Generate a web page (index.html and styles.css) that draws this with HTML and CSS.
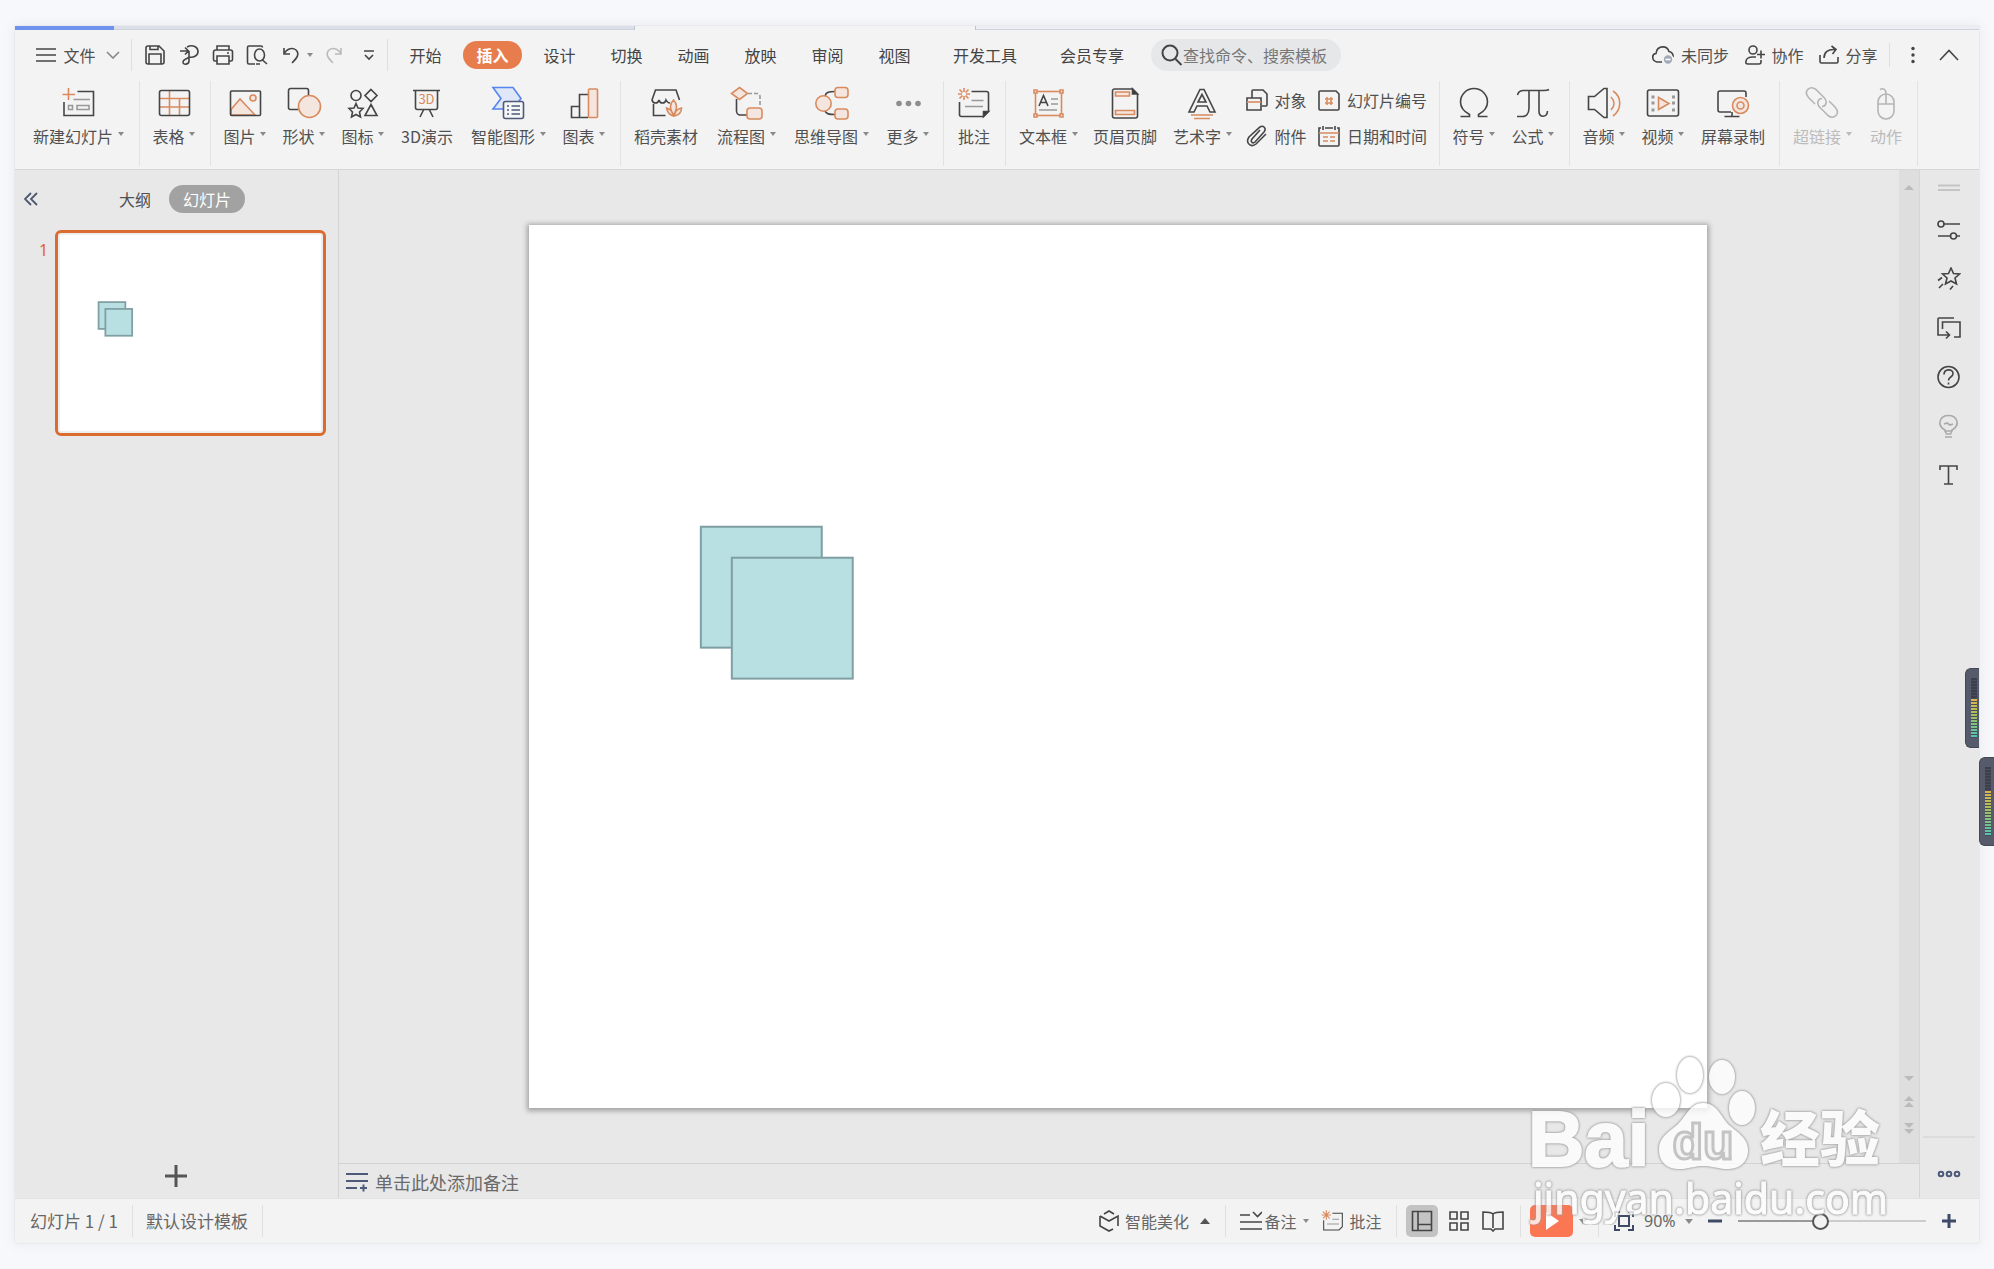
FILE: index.html
```html
<!DOCTYPE html>
<html lang="zh-CN">
<head>
<meta charset="utf-8">
<title>演示文稿</title>
<link rel="stylesheet" href="styles.css">
</head>
<body>
<div class="window">
  <div class="doc-tabs"><span class="doc-tab home"></span><span class="doc-tab"></span><span class="doc-tab current"></span><span class="doc-tab rest"></span></div>

  <header class="menubar">
    <button class="file-btn">
      <svg width="20" height="16" viewBox="0 0 20 16"><path d="M0 2h20M0 8h20M0 14h20"/></svg>
      <span>文件</span>
      <svg width="14" height="8" viewBox="0 0 14 8" class="thin"><path d="M1 1l6 6 6-6"/></svg>
    </button>
    <div class="quick">
      <button aria-label="保存"><svg width="22" height="22" viewBox="0 0 22 22"><path d="M4 2h11l5 5v11a2 2 0 0 1-2 2H4a2 2 0 0 1-2-2V4a2 2 0 0 1 2-2zM5 20V10h12v10M6 2v3.500h8V2"/></svg></button>
      <button aria-label="输出为PDF"><svg width="22" height="22" viewBox="0 0 22 22"><path d="M2 7h8M7 3.500L10.500 7 7 10.500M9 3c6-3 11 0 11 4.500S15 14 11 13M11 7v10c0 3.500-6 4.500-6 1 0-3 3-2 6-5"/></svg></button>
      <button aria-label="打印"><svg width="22" height="22" viewBox="0 0 22 22"><path d="M5 6V2h12v4M5 17H3a1.500 1.500 0 0 1-1.500-1.500V8A2 2 0 0 1 3.500 6h15a2 2 0 0 1 2 2v7.500A1.500 1.500 0 0 1 19 17h-2M5 12h12v8H5zM15 9h2"/></svg></button>
      <button aria-label="打印预览"><svg width="22" height="22" viewBox="0 0 22 22"><path d="M9 20H3a1.500 1.500 0 0 1-1.500-1.500v-15A1.500 1.500 0 0 1 3 2h12a1.500 1.500 0 0 1 1.500 1.500M10 20h4M16.500 16l4.500 4"/><ellipse cx="13.500" cy="11" rx="5" ry="6"/></svg></button>
      <button class="undo" aria-label="撤销"><svg width="18" height="20" viewBox="0 0 18 20"><path d="M2 3v6h6M2 9c3-6 9-6.500 12-4 4 4 1 8-4 13"/></svg><i class="caret"></i></button>
      <button class="dim" aria-label="恢复"><svg width="18" height="20" viewBox="0 0 18 20"><path d="M16 3v6h-6M16 9C13 3 7 2.500 4 5c-4 4-1 8 4 13"/></svg></button>
      <button class="custom" aria-label="自定义"><svg width="12" height="14" viewBox="0 0 12 14"><path d="M1 3h10M2 7l4 4 4-4"/></svg></button>
    </div>
    <nav class="tabs">
      <button>开始</button><button class="active">插入</button><button>设计</button><button>切换</button><button>动画</button><button>放映</button><button>审阅</button><button>视图</button><button class="wide">开发工具</button><button class="wide">会员专享</button>
    </nav>
    <label class="search"><svg width="22" height="22" viewBox="0 0 22 22"><circle cx="9" cy="9" r="7.500"/><path d="M14.500 15l6 6"/></svg><input type="text" placeholder="查找命令、搜索模板" aria-label="查找命令、搜索模板"></label>
    <div class="account">
      <button><svg width="22" height="20" viewBox="0 0 22 20"><path d="M10 17H5C-.500 16-.500 9 4 8.500 5 0 15 0 17 6.500c3 .500 4.500 3 4 5.500"/><circle cx="16" cy="14.500" r="5" class="badge"/><path d="M13.500 14.500h5" stroke="#fff"/></svg><span class="c3">未同步</span></button>
      <button><svg width="20" height="20" viewBox="0 0 20 20"><circle cx="8" cy="5" r="4"/><path d="M16 15v2a2 2 0 0 1-2 2H3c-2 0-2.500-1-2-3 .500-3 3-4 7-4h3M12 9.500h8M16 5.500v8"/></svg><span class="c2">协作</span></button>
      <button><svg width="20" height="20" viewBox="0 0 20 20"><path d="M1 10v6.500A1.500 1.500 0 0 0 2.500 18h15a1.500 1.500 0 0 0 1.500-1.500V12M5 13c0-6 4-9 11-8.500M12.500 1l4.500 3.500L13.500 9"/></svg><span class="c2">分享</span></button>
    </div>
    <div class="extras">
      <button aria-label="更多选项"><svg width="6" height="18" viewBox="0 0 6 18" class="dots"><circle cx="3" cy="2.500" r="1.700"/><circle cx="3" cy="9" r="1.700"/><circle cx="3" cy="15.500" r="1.700"/></svg></button>
      <button aria-label="收起功能区"><svg width="20" height="12" viewBox="0 0 20 12"><path d="M1 11l9-9.500 9 9.500"/></svg></button>
    </div>
  </header>

  <section class="ribbon">
    <div class="group">
      <button class="tool"><svg viewBox="0 0 36 36"><path d="M17.500 6.500h16v24H4V17"/><path class="g" d="M13.500 14.500H30M8.500 20.500h4v4h-4zM17 20.500h12v4H17z"/><path class="o" d="M2.500 9.500h12.500M8.500 3v12"/></svg><span><b class="c5">新建幻灯片</b><i class="caret"></i></span></button>
    </div>
    <div class="group">
      <button class="tool"><svg viewBox="0 0 36 36"><path class="o" d="M4 13.500h29M4 22h29M13.500 5v25.500M23.500 13.500v17"/><rect x="3.500" y="5.500" width="30" height="25" rx="2"/></svg><span><b class="c2">表格</b><i class="caret"></i></span></button>
    </div>
    <div class="group">
      <button class="tool"><svg viewBox="0 0 36 36"><path class="of" d="M4 24.500L13 14l15 16H4z"/><circle class="of" cx="26" cy="13" r="3"/><rect x="3.500" y="6" width="30" height="24.500" rx="1"/></svg><span><b class="c2">图片</b><i class="caret"></i></span></button>
      <button class="tool"><svg viewBox="0 0 36 36"><path d="M12 24.500H4.500a2 2 0 0 1-2-2v-17a2 2 0 0 1 2-2h16a2 2 0 0 1 2 2v6"/><circle class="of" cx="23.500" cy="21.500" r="11"/></svg><span><b class="c2">形状</b><i class="caret"></i></span></button>
      <button class="tool"><svg viewBox="0 0 36 36"><circle cx="11" cy="10.500" r="5"/><path d="M26 4.500l6 6-6 6-6-6zM26 19.500l6 11H20zM11 18.500l2 4.500 5 .500-3.500 3.500 1 5-4.500-2.500L6.500 32l1-5L4 23.500 9 23z"/></svg><span><b class="c2">图标</b><i class="caret"></i></span></button>
      <button class="tool"><svg viewBox="0 0 36 36"><path d="M4 5.500h27M6.500 5.500v17a2 2 0 0 0 2 2h18a2 2 0 0 0 2-2v-17M14.500 25l-3.500 7M20.500 25l3.500 7"/><text x="17.500" y="19" class="t3d">3D</text></svg><span><b class="c3d">3D演示</b></span></button>
      <button class="tool"><svg viewBox="0 0 36 36"><path class="blue" d="M3 2.500h20l8 11-8 10.500H3l8-10.500z"/><rect x="13.500" y="16.500" width="20" height="17" rx="2" class="navy"/><path class="navy" d="M17 21h2M21.500 21H30M17 25h2M21.500 25H30M17 29h2M21.500 29H30"/></svg><span><b class="c4">智能图形</b><i class="caret"></i></span></button>
      <button class="tool"><svg viewBox="0 0 36 36"><path d="M13.500 32.500h-8v-11h8M22 32.500h-8.500V9.500H22"/><rect class="of" x="22.500" y="4" width="9" height="28.500" rx="1"/></svg><span><b class="c2">图表</b><i class="caret"></i></span></button>
    </div>
    <div class="group docer">
      <button class="tool"><svg viewBox="0 0 36 36"><path d="M31.500 15L28 5H7.500L4 15c1 4 6 4 7 0 1 4 6 4 7 0 1 2 2 3 4 3M5.500 19v11.500h12"/><path class="of" d="M25.500 15c-4 4-4 8 0 15.500 4-7.500 4-11.500 0-15.500zM18.500 23c1 5 3 7 7 8-1-5-3-7-7-8zM33.500 23c-4 1-7 3-7 8 4-1 7-3 7-8z"/></svg><span><b class="c4">稻壳素材</b></span></button>
      <button class="tool"><svg viewBox="0 0 36 36"><path d="M8.500 14v12a4 4 0 0 0 4 4h7"/><path class="g" stroke-dasharray="4 2" d="M20 8.500h9a3 3 0 0 1 3 3V22"/><path class="of" d="M11.500 2.500l8 6-8 6-8-6z"/><rect class="of" x="19" y="23" width="15" height="11" rx="3"/></svg><span><b class="c3">流程图</b><i class="caret"></i></span></button>
      <button class="tool"><svg viewBox="0 0 36 36"><path d="M12 11c1-4 4-4.500 10-4.500M12 26c1 3 4 3.500 10 3.500"/><circle class="of" cx="10.500" cy="18.500" r="7.700"/><rect class="of" x="22" y="2.500" width="13" height="10" rx="3"/><rect class="of" x="22" y="24" width="13" height="10" rx="3"/></svg><span><b class="c4">思维导图</b><i class="caret"></i></span></button>
      <button class="tool"><svg viewBox="0 0 36 36"><g class="more"><circle cx="9" cy="18.500" r="2.800"/><circle cx="18.500" cy="18.500" r="2.800"/><circle cx="28" cy="18.500" r="2.800"/></g></svg><span><b class="c2">更多</b><i class="caret"></i></span></button>
    </div>
    <div class="group plain">
      <button class="tool"><svg viewBox="0 0 36 36"><path d="M15.500 6.500h15a2 2 0 0 1 2 2v18l-5 5h-22a2 2 0 0 1-2-2V17"/><path class="dark" d="M32.500 26.500h-5v5z"/><path class="g" d="M15.500 15.500h12M9 21.500h18"/><path class="o" d="M2 9h4M10 9h4M8 3v4M8 11v4M3.500 4.500l3 3M9.500 10.500l3 3M12.500 4.500l-3 3M6.500 10.500l-3 3"/></svg><span><b class="c2">批注</b></span></button>
    </div>
    <div class="group text">
      <button class="tool"><svg viewBox="0 0 36 36"><rect class="o" x="5.500" y="6.500" width="26" height="24"/><g class="knob"><path d="M4 5h3v3H4zM30 5h3v3h-3zM4 29h3v3H4zM30 29h3v3h-3z"/></g><path d="M9 21l4.500-10.500L18 21M10.500 17.500h6"/><path class="g" d="M21 14h7M21 19h7M9 25h18"/></svg><span><b class="c3">文本框</b><i class="caret"></i></span></button>
      <button class="tool"><svg viewBox="0 0 36 36"><path d="M25.500 4h-18a2 2 0 0 0-2 2v25a2 2 0 0 0 2 2h21a2 2 0 0 0 2-2V9z"/><path class="dark" d="M25.500 4v5h5z"/><path class="of" d="M8.500 7h14v4h-14zM8.500 25.500h19v4h-19z"/></svg><span><b class="c4">页眉页脚</b></span></button>
      <button class="tool"><svg viewBox="0 0 36 36"><path d="M16 4.500h4L31 27h-5l-3-6H13l-3 6H5zM18 9.500l-4 7.500h8z"/><path class="o" d="M7 30h22M10 33.500h16"/></svg><span><b class="c3">艺术字</b><i class="caret"></i></span></button>
      <div class="stack">
        <button><svg viewBox="0 0 22 22"><path d="M6 9V2a1 1 0 0 1 1-1h10l4 4v11a1 1 0 0 1-1 1h-4M1 9h14v12H1z"/><path class="o" d="M1 13h14"/></svg><b class="c2">对象</b></button>
        <button><svg viewBox="0 0 22 22"><path d="M18 2H2a1 1 0 0 0-1 1v17a1 1 0 0 0 1 1h18a1 1 0 0 0 1-1V5z"/><path class="o" d="M9 8v8M13 8v8M7 10h8M7 14h8"/></svg><b class="c5">幻灯片编号</b></button>
        <button><svg viewBox="0 0 22 22"><path d="M14 5l-8 9c-2 3 1 5 3 3l9-10c3-4-1-7-4-5L3 12c-4 6 2 11 7 7l10-10"/></svg><b class="c2">附件</b></button>
        <button><svg viewBox="0 0 22 22"><path d="M3 3H1v17a1 1 0 0 0 1 1h18a1 1 0 0 0 1-1V3h-2M7 3h8M5 1v4M17 1v4"/><path class="o" d="M1 8h20M5 12h5M12 12h5M5 16h5M12 16h5"/></svg><b class="c5">日期和时间</b></button>
      </div>
    </div>
    <div class="group">
      <button class="tool"><svg viewBox="0 0 36 36"><path d="M4.500 31.500h9v-2C7 26 4.500 22 4.500 17a13.500 13.500 0 0 1 27 0c0 5-2.500 9-9 12.500v2h9"/></svg><span><b class="c2">符号</b><i class="caret"></i></span></button>
      <button class="tool"><svg viewBox="0 0 36 36"><path d="M2.500 10c1-4 3-4.500 6-4.500h20c3 0 4 0 5.500-1M14 6v17c0 6-3 9-8 8.500H2M24 6v20c0 7 8 7 8.500 0"/></svg><span><b class="c2">公式</b><i class="caret"></i></span></button>
    </div>
    <div class="group plain">
      <button class="tool"><svg viewBox="0 0 36 36"><path d="M2.500 11.500h6l9.500-8h3v29h-3l-9.500-8h-6z"/><path class="o" d="M25 12c4 4 4 9 0 13M27 6c9 6 9 18 0 25"/></svg><span><b class="c2">音频</b><i class="caret"></i></span></button>
      <button class="tool"><svg viewBox="0 0 36 36"><rect x="2.500" y="5" width="31" height="26" rx="2"/><path class="of" d="M13.500 12.500v12L24 18.500z"/><path class="g" d="M6.500 12h3M6.500 18h3M6.500 25h3M27 12h3M27 18h3M27 25h3" stroke-width="3"/></svg><span><b class="c2">视频</b><i class="caret"></i></span></button>
      <button class="tool"><svg viewBox="0 0 36 36"><path d="M16 27H5a2 2 0 0 1-2-2V8a2 2 0 0 1 2-2h24a2 2 0 0 1 2 2v4M17 27v4M9.500 31.500h15"/><circle class="of" cx="25.500" cy="20.500" r="8"/><circle class="o" cx="25.500" cy="20.500" r="3.500"/></svg><span><b class="c4">屏幕录制</b></span></button>
    </div>
    <div class="group plain">
      <button class="tool off" disabled><svg viewBox="0 0 36 36"><path d="M11 19L4.500 12.500C-1 6 6 0 12 4.500l8 8c4 4 2 9-2 9M25 16l6 6c6 7-1 13-7 8.500l-8-8c-4-4-2-9 2-9"/></svg><span><b class="c3">超链接</b><i class="caret"></i></span></button>
      <button class="tool off" disabled><svg viewBox="0 0 36 36"><rect x="10" y="9" width="16" height="25" rx="8"/><path d="M10 19h16M18 19V8c0-4-3-5-6-3.500"/></svg><span><b class="c2">动作</b></span></button>
    </div>
  </section>

  <main class="workspace">
    <aside class="outline">
      <div class="outline-head">
        <button class="collapse" aria-label="收起"><svg width="14" height="14" viewBox="0 0 14 14"><path d="M7 1L1 7l6 6M13 1L7 7l6 6"/></svg></button>
        <button class="o-tab">大纲</button><button class="o-tab on">幻灯片</button>
      </div>
      <div class="thumb-row">
        <span class="num">1</span>
        <button class="thumb" aria-label="幻灯片 1"><svg viewBox="0 0 1179 883" class="shapes mini"><rect x="171" y="301" width="122" height="122"/><rect x="202" y="332" width="122" height="122"/></svg></button>
      </div>
      <button class="add" aria-label="新建幻灯片"><svg width="22" height="22" viewBox="0 0 22 22"><path d="M0 11h22M11 0v22"/></svg></button>
    </aside>
    <section class="editor">
      <div class="stage">
        <div class="canvas"><div class="slide"><svg viewBox="0 0 1179 883" class="shapes"><rect x="172" y="302" width="121" height="121"/><rect x="203" y="333" width="121" height="121"/></svg></div></div>
        <div class="scroll">
          <svg width="10" height="6" viewBox="0 0 10 6"><path d="M0 6l5-5 5 5z"/></svg>
          <div class="scroll-end">
            <svg width="10" height="6" viewBox="0 0 10 6"><path d="M0 0l5 5 5-5z"/></svg>
            <svg width="10" height="12" viewBox="0 0 10 12"><path d="M0 5l5-5 5 5zM0 11l5-5 5 5z"/></svg>
            <svg width="10" height="12" viewBox="0 0 10 12"><path d="M0 1l5 5 5-5zM0 7l5 5 5-5z"/></svg>
          </div>
        </div>
      </div>
      <div class="notes"><svg width="22" height="20" viewBox="0 0 22 20"><path d="M0 2h22M0 9h22M0 16h11M14 16h7M17.500 12.500v7"/></svg><span>单击此处添加备注</span></div>
    </section>
    <aside class="side">
      <svg width="22" height="8" viewBox="0 0 22 8" class="grip"><path d="M0 1.500h22M0 6h22"/></svg>
      <div class="side-tools">
        <button aria-label="属性"><svg viewBox="0 0 24 24"><circle cx="4" cy="6" r="3"/><circle cx="16.500" cy="18" r="3"/><path d="M7 6h16M1 18h12.500M19.500 18H23"/></svg></button>
        <button aria-label="动画"><svg viewBox="0 0 24 24"><path d="M14 1l2.500 5.500 6 .500-4.500 4 1.500 6-5.500-3-5.500 3L10 11 5.500 7l6-.500zM5 10.500l-4 3M6 17l-4 4M16 19l-3 3.500"/></svg></button>
        <button aria-label="切换"><svg viewBox="0 0 24 24"><path d="M17 2H2a1 1 0 0 0-1 1v16h11M9 15.500l3.500 3.500L9 22.500M5.500 13V6H23v15h-6"/></svg></button>
        <button aria-label="帮助"><svg viewBox="0 0 24 24"><circle cx="11.500" cy="12" r="10.500"/><path d="M7 9.500c0-6 9-6 9-1 0 4-4.500 3-4.500 7M11.500 17.500v2"/></svg></button>
        <button class="pale" aria-label="提示"><svg viewBox="0 0 24 24"><path d="M8 17v-1C-1 11 3 1.500 11.500 1.500S24 11 15 16v1l-1.500 3h-4zM7 10l3-1 3 2 3-1M8 17h7M8 23h7"/></svg></button>
        <button aria-label="文本"><svg viewBox="0 0 24 24"><path d="M3 7V3h17v4M11.500 3v18M7 21h9"/></svg></button>
      </div>
      <div class="side-end"><button aria-label="更多"><svg width="24" height="10" viewBox="0 0 24 10"><circle cx="4" cy="5" r="2.300"/><circle cx="12" cy="5" r="2.300"/><circle cx="20" cy="5" r="2.300"/></svg></button></div>
    </aside>
  </main>

  <footer class="status">
    <span class="cell info">幻灯片 1 / 1</span>
    <span class="cell info">默认设计模板</span>
    <div class="cells">
      <div class="cell first"><button><svg width="22" height="22" viewBox="0 0 22 22"><path d="M6 4l5-3 5 3M2 6l9 5 9-5v10M2 6v10l9 5 4-2"/></svg><span>智能美化</span><i class="caret up"></i></button></div>
      <div class="cell two"><button><svg width="22" height="20" viewBox="0 0 22 20"><path d="M0 4h10M13 1l4.500 4.500L22 1M0 11h22M0 18h22"/></svg><span class="near">备注</span><i class="caret"></i></button>
      <button><svg width="24" height="24" viewBox="0 0 36 36" class="cm"><path d="M17 6.500h15v20l-5 5H4V17"/><path class="g" d="M17 15.500h10M9 22.500h18"/><path class="o" d="M1 9h14M8 2v14M3 4l10 10M13 4L3 14"/></svg><span>批注</span></button></div>
      <div class="cell views">
        <button class="on" aria-label="普通视图"><svg width="22" height="22" viewBox="0 0 22 22"><path d="M1.500 1.500h19v19h-19zM7 1.500v19M7 14.500h13.500"/></svg></button>
        <button aria-label="浏览视图"><svg width="20" height="22" viewBox="0 0 20 22"><path d="M1 2h7v7H1zM12 2h7v7h-7zM1 13h7v7H1zM12 13h7v7h-7z"/></svg></button>
        <button aria-label="阅读视图"><svg width="22" height="22" viewBox="0 0 22 22"><path d="M11 4C9 2 6 2 1 2v17h8l2 2 2-2h8V2c-5 0-8 0-10 2zM11 4v14"/></svg></button>
      </div>
      <div class="cell show"><button class="play" aria-label="放映"><svg width="14" height="18" viewBox="0 0 14 18"><path d="M1 0l13 9L1 18z"/></svg></button><i class="caret"></i></div>
      <div class="zoom">
        <button aria-label="适应窗口"><svg width="22" height="20" viewBox="0 0 22 20"><path d="M2 6V1h5M15 1h5v5M20 14v5h-5M7 19H2v-5M6 5h10v10H6z"/></svg></button>
        <span class="pct">90%</span><i class="caret"></i>
        <button class="bold" aria-label="缩小"><svg width="16" height="16" viewBox="0 0 16 16"><path d="M1 8h14"/></svg></button>
        <input type="range" min="0" max="100" value="43" aria-label="显示比例">
        <button class="bold" aria-label="放大"><svg width="16" height="16" viewBox="0 0 16 16"><path d="M1 8h14M8 1v14"/></svg></button>
      </div>
    </div>
  </footer>
</div>

<div class="meter near-edge"></div>
<div class="meter at-edge"></div>

<svg class="watermark" width="370" height="185" viewBox="0 0 370 185" aria-hidden="true">
  <g class="wm">
    <text x="8" y="126" class="wm-bai">Bai</text>
    <ellipse cx="146" cy="60" rx="14" ry="17"/><ellipse cx="170" cy="35" rx="13" ry="18"/><ellipse cx="202" cy="37" rx="13" ry="17"/><ellipse cx="222" cy="68" rx="13" ry="17"/>
    <path d="M183 63c14 0 18 14 26 22 8 7 19 13 19 25 0 15-12 20-24 19-8-1-13-3-21-3s-12 2-20 3c-14 1-24-5-24-20 0-12 10-17 18-24 9-8 13-22 26-22z"/>
    <text x="183" y="119" class="wm-du">du</text>
    <text x="240" y="121" class="wm-jy">经验</text>
    <text x="13" y="174" class="wm-url">jingyan.baidu.com</text>
  </g>
</svg>
</body>
</html>
```
FILE: styles.css
```css
* { box-sizing: border-box; }

body {
  margin: 0;
  padding: 26px 15px;
  position: relative;
  min-height: 100vh;
  display: flex;
  flex-direction: column;
  overflow-x: hidden;
  background: #f7f8fb;
  color: #505050;
  font: 16px/24px "Noto Sans CJK SC", sans-serif;
}

button {
  border: 0;
  padding: 0;
  background: none;
  color: inherit;
  font: inherit;
  display: flex;
  align-items: center;
  white-space: nowrap;
}

b { font-weight: inherit; }

svg {
  display: block;
  flex: none;
  fill: none;
  stroke: #454545;
  stroke-width: 1.6;
}

.caret {
  flex: none;
  border: 3px solid transparent;
  border-top: 4px solid #8a8a8a;
  border-bottom: 0;
}
.caret.up {
  border: 5px solid transparent;
  border-bottom: 6px solid #555;
  border-top: 0;
}

.window {
  flex: 1;
  display: flex;
  flex-direction: column;
  background: #f3f3f3;
  box-shadow: 0 0 12px 2px rgba(0, 0, 0, 0.05), 0 0 1px rgba(0, 0, 0, 0.2);
}

/* Document tab strip */
.doc-tabs { display: flex; height: 4px; }
.doc-tab { width: 521px; background: #dcdfe8; border-bottom: 1px solid #ced2df; border-right: 1px solid #bfc4d2; }
.doc-tab.home { width: 99px; background: #6f93ec; border: 0; }
.doc-tab.current { width: 341px; background: #f3f3f3; border-bottom: 0; }
.doc-tab.rest { flex: 1; background: #eceef4; border-right: 0; }

/* Menu bar */
.menubar { display: flex; align-items: center; height: 47px; padding-top: 2px; }
.file-btn { gap: 7px; padding: 0 11px 0 21px; height: 32px; border-right: 1px solid #dfdfdf; }
.file-btn span { width: 33px; }
.file-btn svg:last-child { margin-left: 3px; }
.thin { stroke: #888; }
.quick { display: flex; align-items: center; gap: 12px; height: 32px; padding: 0 12px; border-right: 1px solid #dfdfdf; }
.undo { gap: 7px; padding-left: 2px; }
.dim svg { stroke: #bbb; }
.custom { margin-left: 8px; }
.tabs { display: flex; gap: 8px; margin-left: 8px; }
.tabs button { height: 28px; min-width: 59px; justify-content: center; padding: 0 13px; border-radius: 14px; color: #444; }
.tabs .active { background: #e77c4c; color: #fff; font-weight: 700; }
.tabs .wide { margin-left: 7px; min-width: 92px; }
.search { display: flex; align-items: center; width: 190px; height: 32px; margin-left: 13px; padding-left: 10px; border-radius: 16px; background: #e6e7e9; }
.search svg { stroke-width: 2; }
.search input { width: 156px; border: 0; padding: 0; outline: 0; background: none; font: inherit; }
.search input::placeholder { color: #777; opacity: 1; }
.account { display: flex; gap: 15px; margin-left: auto; padding-right: 11px; border-right: 1px solid #dfdfdf; }
.account button { gap: 6px; }
.account .badge { fill: #a2a9b8; stroke: #f3f3f3; }
.extras { display: flex; align-items: center; gap: 23px; padding: 0 20px; }
.dots { fill: #444; stroke: none; }

/* Ribbon */
.ribbon { display: flex; height: 93px; padding: 4px 0 3px; border-bottom: 1px solid #d6d6d6; overflow: hidden; }
.group { display: flex; gap: 16px; padding: 4px 15px 0 12px; border-right: 1px solid #e2e2e2; }
.group:first-child { padding-left: 17px; }
.group.plain { padding-right: 13px; }
.group.docer { gap: 17px; padding-right: 14px; }
.group.text { gap: 14px; padding-right: 11px; }
.tool { flex-direction: column; gap: 3px; align-self: flex-start; }
.tool svg { width: 36px; height: 36px; }
.tool span { display: flex; align-items: center; gap: 4px; }
.tool b { text-align: center; }
.tool .caret { margin-bottom: 4px; }
.c2 { width: 33px; }
.c3 { width: 50px; }
.c4 { width: 66px; }
.c5 { width: 82px; }
.c3d { width: 54px; }
.o { stroke: #d98b5f; }
.of { stroke: #d98b5f; fill: #f4e6de; }
.g { stroke: #999; }
.dark { fill: #333; }
.knob { fill: #f4e6de; stroke: #d98b5f; }
.blue { stroke: #5585ee; fill: #dfe7f8; }
.navy { stroke: #4d5a78; fill: #f5f6f8; }
.more { fill: #8d8d8d; stroke: none; }
.t3d { font: 13px "Noto Sans CJK SC", sans-serif; fill: #d98b5f; stroke: none; text-anchor: middle; }
.off { color: #bbb; }
.off svg { stroke: #b5b5b5; }
.off .caret { border-top-color: #bbb; }
.stack { display: grid; grid-template-columns: auto auto; gap: 12px 11px; align-content: start; padding-top: 3px; }
.stack button { gap: 6px; }
.stack svg { width: 22px; height: 22px; }

/* Workspace */
.workspace { flex: 1; display: flex; background: #e8e8e8; }
.outline { width: 324px; display: flex; flex-direction: column; border-right: 1px solid #d4d4d4; }
.outline-head { display: flex; align-items: center; height: 28px; margin-top: 15px; padding-left: 9px; }
.collapse svg { stroke: #4f5a70; stroke-width: 1.8; }
.o-tab { height: 28px; padding: 0 14px; border-radius: 14px; margin-left: 67px; }
.o-tab.on { margin-left: 4px; background: #a2a2a2; color: #fff; }
.thumb-row { display: flex; gap: 8px; margin-top: 17px; padding: 0 12px 0 24px; }
.num { width: 8px; padding-top: 8px; font-family: "Noto Sans", sans-serif; line-height: 24px; color: #e0661f; }
.thumb { flex: 1; padding: 3px; border: 3px solid #d96c2e; border-radius: 6px; background: #fff; box-shadow: inset 0 0 0 2px #eee; }
.shapes { width: 100%; height: auto; fill: #b8dfe2; stroke: #7f9fa3; stroke-width: 2; }
.mini { stroke-width: 8; }
.add { margin: auto auto 11px 150px; }
.add svg { stroke: #555; stroke-width: 3; }

.editor { flex: 1; display: flex; flex-direction: column; min-width: 0; }
.stage { flex: 1; display: flex; }
.canvas { flex: 1; display: flex; align-items: center; padding: 54px 192px 54px 190px; }
.slide { flex: 1; background: #fff; box-shadow: 0 1px 5px 2px rgba(0, 0, 0, 0.3); }
.scroll { width: 20px; display: flex; flex-direction: column; align-items: center; justify-content: space-between; padding-top: 14px; background: #dedede; }
.scroll svg { fill: #bbb; stroke: none; }
.scroll-end { display: flex; flex-direction: column; align-items: center; gap: 14px; padding-bottom: 29px; }
.notes { display: flex; align-items: center; gap: 7px; height: 35px; padding: 2px 0 0 7px; border-top: 1px solid #d2d2d2; font-size: 18px; color: #6a6a6a; }
.notes svg { stroke: #4d5a78; stroke-width: 2; }

.side { width: 60px; display: flex; flex-direction: column; align-items: center; padding: 14px 2px 0 0; border-left: 1px solid #d6d6d6; }
.grip { stroke: #c4c4c4; stroke-width: 2; }
.side-tools { display: flex; flex-direction: column; gap: 25px; margin-top: 26px; }
.side-tools svg { width: 24px; height: 24px; }
.pale svg { stroke: #aaa; }
.side-end { margin-top: auto; width: 52px; height: 62px; display: flex; align-items: center; justify-content: center; padding-top: 12px; border-top: 2px solid #dcdcdc; }
.side-end svg { stroke: #4d5a78; stroke-width: 2; }

/* Status bar */
.status { display: flex; align-items: center; height: 45px; padding-left: 15px; border-top: 1px solid #e3e3e3; color: #666; }
.cell { display: flex; align-items: center; height: 32px; padding-right: 15px; margin-right: 14px; border-right: 1px solid #e0e0e0; }
.info { font-size: 17px; margin-right: 13px; padding-right: 14px; }
.status button { gap: 4px; }
.cells { display: flex; align-items: center; margin-left: auto; padding-right: 22px; }
.first span { width: 66px; }
.status .first .up { margin-left: 6px; }
.two { gap: 12px; padding-right: 14px; margin-right: 9px; }
.two span { width: 33px; }
.near + .caret { margin-left: 2px; }
.near { margin-left: -2px; }
.views { gap: 13px; padding-right: 16px; margin-right: 9px; }
.views .on { width: 32px; height: 32px; margin-right: -2px; justify-content: center; border-radius: 5px; background: #c3c3c3; }
.show { gap: 6px; padding-right: 11px; }
.play { width: 43px; height: 32px; justify-content: center; border-radius: 5px; background: #fb7754; }
.play svg { fill: #fff; stroke: none; }
.show .caret, .zoom .caret { border-width: 4px; border-top-width: 5px; border-bottom-width: 0; }
.zoom { display: flex; align-items: center; }
.zoom svg { stroke: #3f4a66; stroke-width: 2; }
.pct { width: 34px; margin: 0 7px 0 9px; font-family: "Noto Sans", sans-serif; }
.bold svg { stroke-width: 3; }
.zoom .caret + .bold { margin-left: 14px; }
.zoom input { appearance: none; width: 188px; height: 18px; margin: 0 15px 0 15px; background: linear-gradient(#999, #999) left center / 43% 2px no-repeat, linear-gradient(#ccc, #ccc) left center / 100% 2px no-repeat; }
.zoom input::-webkit-slider-thumb { appearance: none; width: 17px; height: 17px; border: 2px solid #555; border-radius: 50%; background: #f3f3f3; }

/* Level meters docked to the screen edge */
.meter { position: absolute; right: 15px; top: 668px; width: 14px; height: 80px; padding: 9px 2px 9px 5px; border: 1px solid #444853; border-right: 0; border-radius: 6px 0 0 6px; background: #555b6b; }
.meter.at-edge { right: 0; top: 757px; width: 15px; height: 89px; padding-right: 3px; }
.meter::before { content: ""; display: block; height: 100%; background: repeating-linear-gradient(transparent 0 2px, #484d59 2px 3px), linear-gradient(#3c404c 34%, #e0b44c 35%, #a9bf5c 60%, #4cc4b4); }

.watermark { position: absolute; right: 104px; bottom: 44px; stroke: none; pointer-events: none; }
.wm { fill: #fff; opacity: 0.8; filter: drop-shadow(0 0 1px #888) drop-shadow(0 0 1px #aaa); }
.wm-bai { font: 700 78px "Liberation Sans", sans-serif; stroke: #fff; stroke-width: 2; }
.wm-du { font: 700 50px "Liberation Sans", sans-serif; text-anchor: middle; fill: #f7f7f7; stroke: #bbb; stroke-width: 3; }
.wm-jy { font: 900 60px "Noto Sans CJK SC", sans-serif; }
.wm-url { font: 41px "Noto Sans", sans-serif; stroke: #fff; stroke-width: 1; }
```
